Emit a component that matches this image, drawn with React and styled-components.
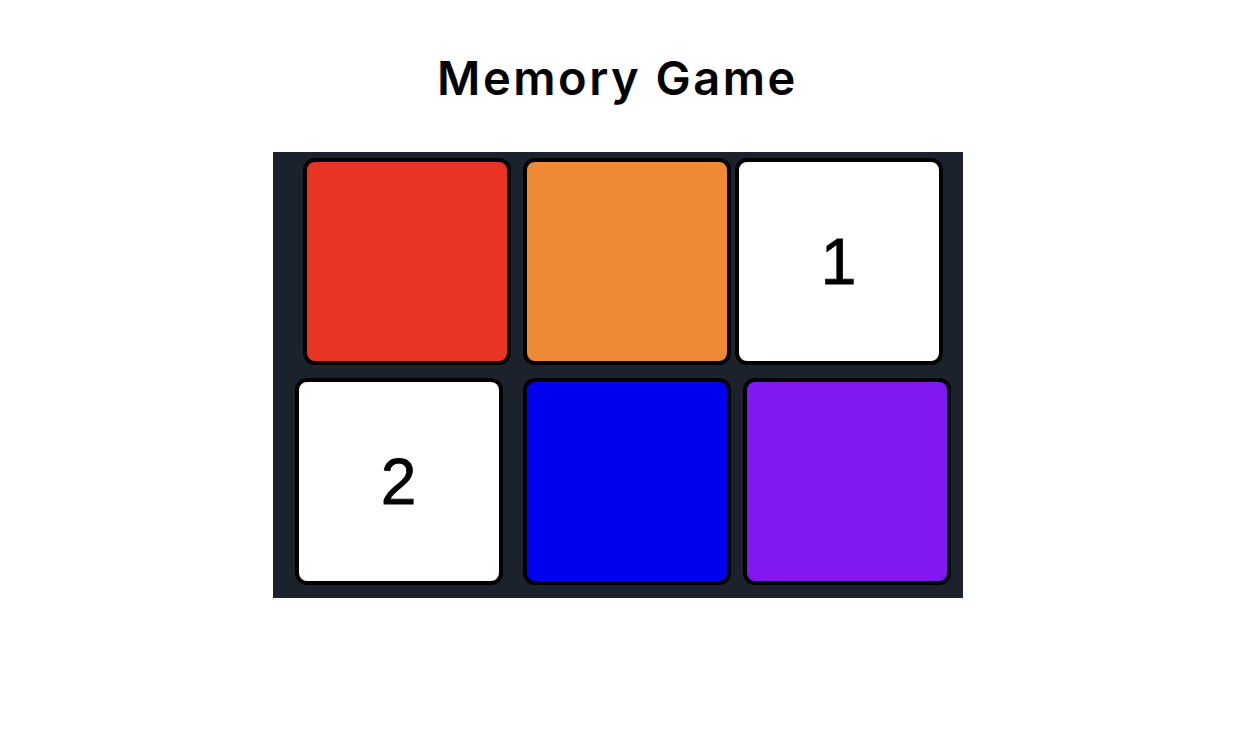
import React from 'react';
import styled, { createGlobalStyle } from 'styled-components';

const GlobalStyle = createGlobalStyle`
  body {
    margin: 0;
    background: #fff;
    font-family: Inter, 'Liberation Sans', sans-serif;
  }
`;

const Page = styled.div`
  display: flex;
  flex-direction: column;
  align-items: center;
`;

const Title = styled.h1`
  margin: 50px 0 46px;
  font-size: 47px;
  line-height: 56px;
  font-weight: 600;
  letter-spacing: 2.5px;
  color: #000;
`;

const Board = styled.div`
  display: grid;
  grid-template-columns: repeat(3, 230px);
  row-gap: 13px;
  padding: 6px 0 13px;
  background: #1b222b;
`;

const Card = styled.div`
  width: 208px;
  height: 207px;
  box-sizing: border-box;
  margin-left: ${(p) => p.$shift}px;
  display: flex;
  align-items: center;
  justify-content: center;
  border: 4px solid #000;
  border-radius: 12px;
  background: ${(p) => (p.$open ? '#fff' : p.$color)};
  font-family: 'Liberation Sans', Arial, sans-serif;
  font-size: 64px;
  -webkit-text-stroke: 0.8px #000;
  color: #000;
`;

// cards sit a little off the column line, like they were just dealt
const cards = [
  { id: 1, color: '#e93424', shift: 30 },
  { id: 2, color: '#ef8934', shift: 20 },
  { id: 3, color: '#fff', shift: 2, value: 1 },
  { id: 4, color: '#fff', shift: 22, value: 2 },
  { id: 5, color: '#0000ef', shift: 20 },
  { id: 6, color: '#8118f2', shift: 10 },
];

const App = () => {
  return (
    <Page>
      <GlobalStyle />
      <Title>Memory Game</Title>
      <Board>
        {cards.map((card) => (
          <Card
            key={card.id}
            $color={card.color}
            $shift={card.shift}
            $open={card.value !== undefined}
          >
            {card.value}
          </Card>
        ))}
      </Board>
    </Page>
  );
};

export default App;
